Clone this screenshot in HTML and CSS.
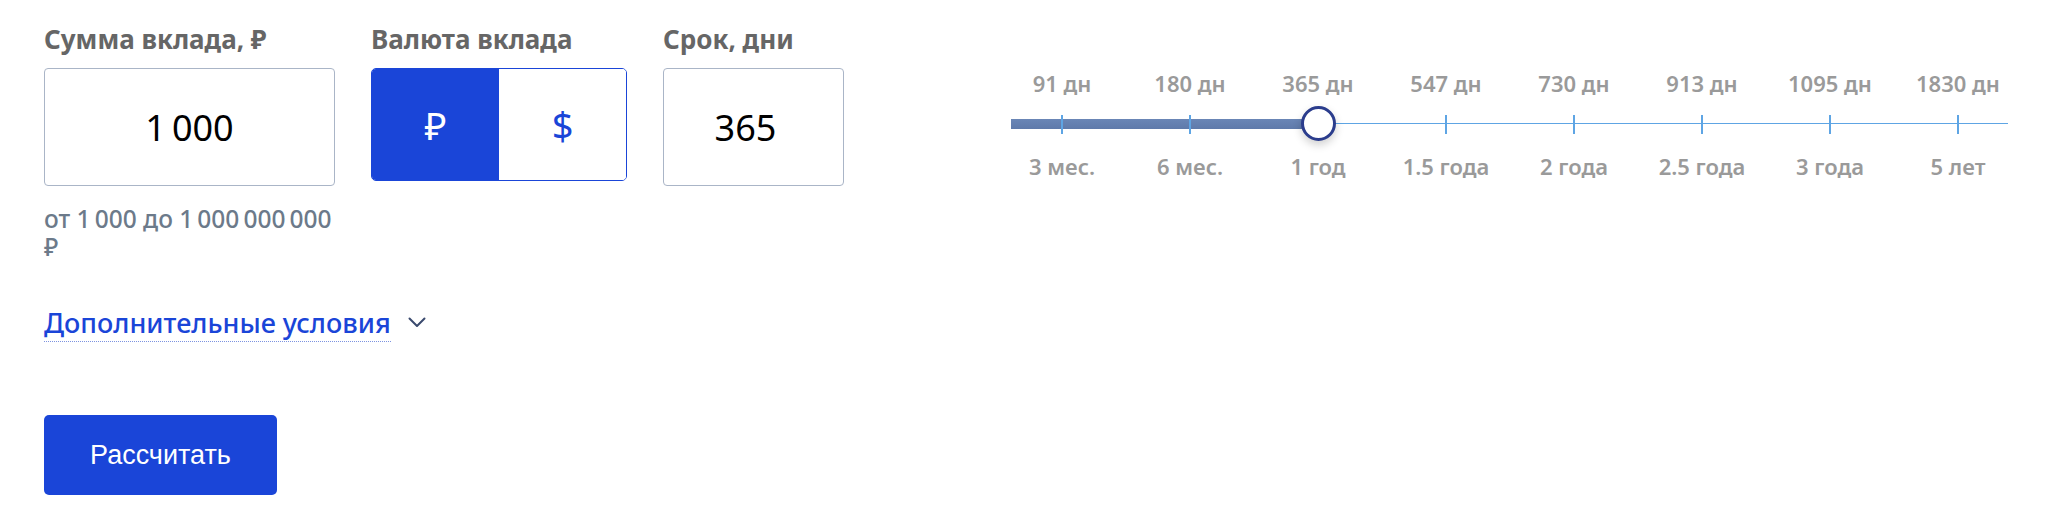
FILE: index.html
```html
<!DOCTYPE html>
<html lang="ru">
<head>
<meta charset="utf-8">
<title>Калькулятор вклада</title>
<link rel="stylesheet" href="styles.css">
</head>
<body>
<div class="calc">
  <div class="top">
    <div class="fields">
      <div class="field field-sum">
        <div class="label">Сумма вклада, ₽</div>
        <div class="box input">1&#8239;000</div>
        <div class="hint">от 1&#8239;000 до 1&#8239;000&#8239;000&#8239;000 ₽</div>
      </div>
      <div class="field field-cur">
        <div class="label">Валюта вклада</div>
        <div class="toggle">
          <div class="opt active">₽</div>
          <div class="opt">$</div>
        </div>
      </div>
      <div class="field field-term">
        <div class="label">Срок, дни</div>
        <div class="box input input-term">365</div>
      </div>
    </div>
    <div class="slider">
      <div class="marks">
        <span>91 дн</span><span>180 дн</span><span>365 дн</span><span>547 дн</span>
        <span>730 дн</span><span>913 дн</span><span>1095 дн</span><span>1830 дн</span>
      </div>
      <div class="rail">
        <div class="line"></div>
        <div class="fill"></div>
        <div class="ticks">
          <i></i><i></i><i></i><i></i><i></i><i></i><i></i><i></i>
        </div>
        <div class="knob"></div>
      </div>
      <div class="marks marks-bottom">
        <span>3 мес.</span><span>6 мес.</span><span>1 год</span><span>1.5 года</span>
        <span>2 года</span><span>2.5 года</span><span>3 года</span><span>5 лет</span>
      </div>
    </div>
  </div>
  <div class="more">
    <span class="more-link">Дополнительные условия</span>
    <svg class="chev" width="18" height="11" viewBox="0 0 18 11"><path d="M1.5 1.5 L9 9 L16.5 1.5" fill="none" stroke="#3a4a6e" stroke-width="2" stroke-linecap="round" stroke-linejoin="round"/></svg>
  </div>
  <button class="btn">Рассчитать</button>
</div>
</body>
</html>
```

FILE: styles.css
```css
html, body {
  margin: 0;
  padding: 0;
  background: #ffffff;
}

body {
  font-family: "Noto Sans", "Open Sans", "DejaVu Sans", sans-serif;
}

.calc {
  padding: 24px 0 0 44px;
}

.top {
  display: flex;
  align-items: flex-start;
}

.fields {
  display: flex;
  gap: 36px;
  align-items: flex-start;
}

.field-sum {
  width: 291px;
}

.label {
  font-size: 26px;
  line-height: 30px;
  font-weight: 700;
  color: #666666;
  margin-bottom: 14px;
  white-space: nowrap;
}

.box {
  box-sizing: border-box;
  height: 118px;
  border: 1px solid #aab5c7;
  border-radius: 4px;
  display: flex;
  align-items: center;
  justify-content: center;
  font-size: 36px;
  color: #000000;
}

.input-term {
  width: 181px;
  padding-right: 16px;
}

.hint {
  margin-top: 19px;
  font-size: 24.5px;
  line-height: 28px;
  font-weight: 500;
  color: #6c7a8a;
}

.toggle {
  box-sizing: border-box;
  width: 256px;
  height: 113px;
  display: flex;
  border: 1px solid #1a45d8;
  border-radius: 5px;
  overflow: hidden;
}

.opt {
  flex: 1;
  display: flex;
  align-items: center;
  justify-content: center;
  font-size: 38px;
  color: #1a45d8;
  background: #ffffff;
}

.opt.active {
  background: #1a45d8;
  color: #ffffff;
}

.slider {
  margin-left: 154px;
  width: 1024px;
  margin-top: 44px;
}

.marks {
  display: grid;
  grid-template-columns: repeat(8, 128px);
  font-size: 22px;
  line-height: 30px;
  font-weight: 600;
  color: #9a9a9a;
  text-align: center;
  white-space: nowrap;
}

.marks-bottom {
  margin-top: 9px;
}

.rail {
  position: relative;
  height: 36px;
  margin-top: 8px;
}

.line {
  position: absolute;
  left: 13px;
  right: 14px;
  top: 17px;
  height: 1px;
  background: #5ea5e4;
}

.fill {
  position: absolute;
  left: 13px;
  width: 300px;
  top: 13px;
  height: 10px;
  background: linear-gradient(#6a86b6, #5f7aaa);
}

.ticks {
  position: absolute;
  left: 0;
  right: 0;
  top: 9px;
  display: grid;
  grid-template-columns: repeat(8, 128px);
}

.ticks i {
  justify-self: center;
  width: 2px;
  height: 19px;
  background: #5ea5e4;
}

.knob {
  position: absolute;
  left: 303px;
  top: 0;
  box-sizing: border-box;
  width: 35px;
  height: 35px;
  border-radius: 50%;
  border: 3px solid #2b3d8d;
  background: #ffffff;
  box-shadow: 0 4px 8px rgba(0, 0, 0, 0.18);
}

.more {
  margin-top: 46px;
  display: flex;
  align-items: center;
  gap: 17px;
}

.more-link {
  font-size: 27px;
  line-height: 32px;
  font-weight: 500;
  color: #1a45d8;
  padding-bottom: 2px;
  border-bottom: 1px dotted #7d93e0;
}

.chev {
  display: block;
  margin-top: -4px;
}

.btn {
  display: block;
  margin-top: 73px;
  width: 233px;
  height: 80px;
  border: none;
  border-radius: 5px;
  background: #1a45d8;
  color: #ffffff;
  font-family: "Liberation Sans", Arial, sans-serif;
  font-size: 27px;
  padding: 0;
}
```
